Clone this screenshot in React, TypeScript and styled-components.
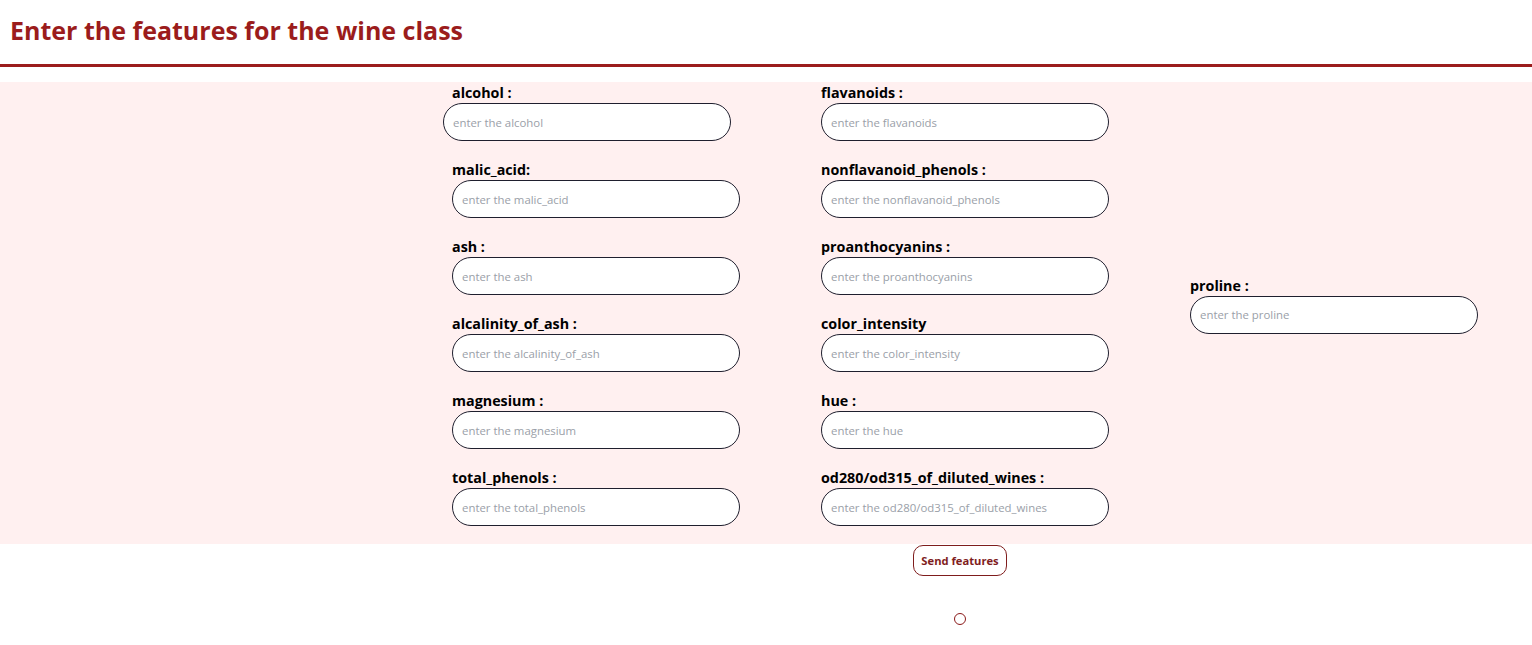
import React, { useState } from "react";
import styled, { createGlobalStyle } from "styled-components";

const GlobalStyle = createGlobalStyle`
  html, body {
    margin: 0;
    padding: 0;
    background: #ffffff;
    font-family: "Open Sans", "Noto Sans", Arial, sans-serif;
  }
`;

const Header = styled.header`
  height: 67px;
  box-sizing: border-box;
  display: flex;
  align-items: center;
  padding: 0 0 4px 10px;
  border-bottom: 3px solid #9b1c1c;
`;

const Title = styled.h1`
  margin: 0;
  font-size: 25px;
  font-weight: 700;
  color: #9b1c1c;
`;

const FeatureArea = styled.section`
  margin-top: 15px;
  background: #fff0f0;
  display: flex;
  align-items: center;
  gap: 81px;
  padding-left: 452px;
`;

const Column = styled.div`
  width: 288px;
  display: flex;
  flex-direction: column;
`;

const Field = styled.div<{ $shift?: number }>`
  display: flex;
  flex-direction: column;
  margin-bottom: 18px;

  input {
    margin-left: ${(p) => p.$shift ?? 0}px;
  }
`;

const Label = styled.label`
  font-size: 14.3px;
  font-weight: 700;
  line-height: 21px;
  color: #000000;
`;

const Input = styled.input`
  box-sizing: border-box;
  width: 288px;
  height: 38px;
  padding: 0 9px;
  border: 1px solid #1f1f2e;
  border-radius: 19px;
  background: #ffffff;
  font-family: inherit;
  font-size: 11.4px;
  color: #222222;
  outline: none;

  &::placeholder {
    color: #9aa0a8;
  }
`;

const Footer = styled.div`
  margin-left: 388px;
  display: flex;
  flex-direction: column;
  align-items: center;
  padding-top: 1px;
`;

const SendButton = styled.button`
  height: 31px;
  padding: 0 7px;
  border: 1px solid #7f1d1d;
  border-radius: 10px;
  background: #ffffff;
  color: #7f1d1d;
  font-family: inherit;
  font-size: 11.2px;
  font-weight: 700;
  cursor: pointer;
`;

const Status = styled.div`
  margin-top: 37px;
  width: 10px;
  height: 10px;
  border: 1.5px solid #8b1a1a;
  border-radius: 50%;
`;

const left = [
  { name: "alcohol", label: "alcohol :" },
  { name: "malic_acid", label: "malic_acid:" },
  { name: "ash", label: "ash :" },
  { name: "alcalinity_of_ash", label: "alcalinity_of_ash :" },
  { name: "magnesium", label: "magnesium :" },
  { name: "total_phenols", label: "total_phenols :" },
];

const middle = [
  { name: "flavanoids", label: "flavanoids :" },
  { name: "nonflavanoid_phenols", label: "nonflavanoid_phenols :" },
  { name: "proanthocyanins", label: "proanthocyanins :" },
  { name: "color_intensity", label: "color_intensity" },
  { name: "hue", label: "hue :" },
  { name: "od280/od315_of_diluted_wines", label: "od280/od315_of_diluted_wines :" },
];

const right = [{ name: "proline", label: "proline :" }];

type Feature = { name: string; label: string };

export default function App() {
  const [values, setValues] = useState<Record<string, string>>({});

  const renderField = (f: Feature) => (
    <Field key={f.name} $shift={f.name === "alcohol" ? -9 : 0}>
      <Label htmlFor={f.name}>{f.label}</Label>
      <Input
        id={f.name}
        placeholder={`enter the ${f.name}`}
        value={values[f.name] ?? ""}
        onChange={(e) => setValues({ ...values, [f.name]: e.target.value })}
      />
    </Field>
  );

  return (
    <>
      <GlobalStyle />
      <Header>
        <Title>Enter the features for the wine class</Title>
      </Header>
      <FeatureArea>
        <Column>{left.map(renderField)}</Column>
        <Column>{middle.map(renderField)}</Column>
        <Column>{right.map(renderField)}</Column>
      </FeatureArea>
      <Footer>
        <SendButton type="button">Send features</SendButton>
        <Status />
      </Footer>
    </>
  );
}
